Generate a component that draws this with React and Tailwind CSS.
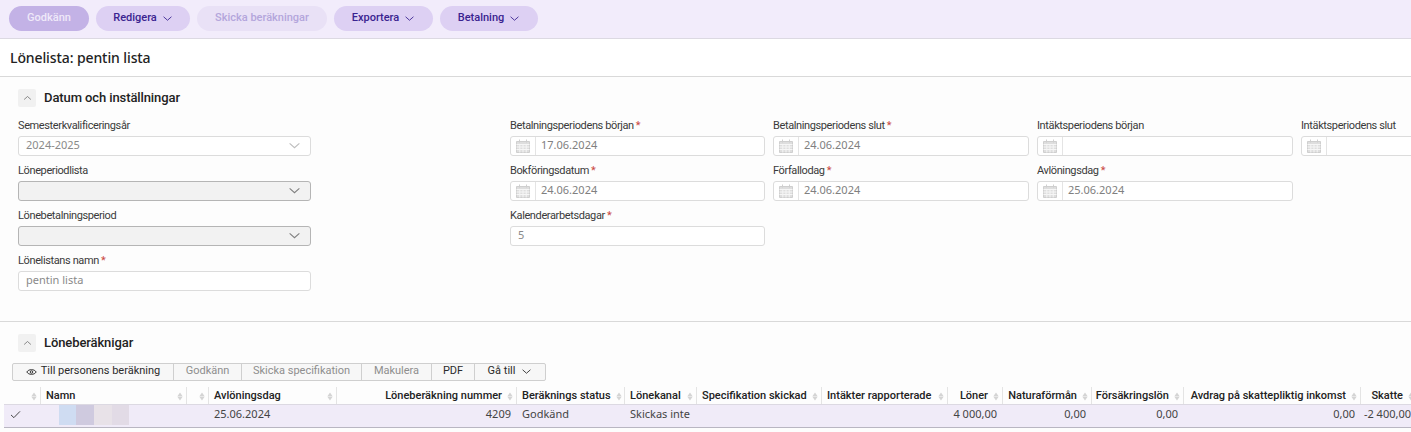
import React from "react";

const UI = { fontFamily: 'Roboto, "Noto Sans", sans-serif' };

const Chevron = ({ className = "", up = false }) => (
  <svg viewBox="0 0 12 8" className={className} fill="none" stroke="currentColor" strokeWidth="1">
    <path d={up ? "M1.5 6 L6 2 L10.5 6" : "M1.5 2 L6 6 L10.5 2"} />
  </svg>
);

const Calendar = () => (
  <svg viewBox="0 0 14 14" className="w-[14px] h-[14px] text-[#cfcfcf]" fill="none" stroke="currentColor" strokeWidth="1">
    <path d="M0.5 2.5h13v11h-13z" fill="#dedede" />
    <path d="M0.5 5.5h13M0.5 8h13M0.5 10.5h13M3.8 5.5v8M7 5.5v8M10.2 5.5v8" stroke="#f6f6f6" />
    <path d="M3.5 0.5v3M10.5 0.5v3" />
  </svg>
);

const Req = () => <span className="text-[#c9473f] ml-[2px]">*</span>;

const Label = ({ children, req }) => (
  <div className="h-[19px] leading-[18px] text-[#3a3a3a] whitespace-nowrap tracking-[-0.38px]" style={UI}>
    {children}
    {req && <Req />}
  </div>
);

const Field = ({ label, req, children }) => (
  <div className="h-[45px] min-w-0">
    <Label req={req}>{label}</Label>
    {children}
  </div>
);

const Box = ({ children, gray }) => (
  <div
    className={
      gray
        ? "h-[20px] border border-[#b5b5b5] rounded-[3px] bg-[#f2f2f2] flex items-center px-[7px] text-[#808080]"
        : "h-[20px] border border-[#dcdcdc] rounded-[3px] bg-white flex items-center px-[7px] text-[#8a8a8a]"
    }
  >
    {children}
  </div>
);

const SelectF = ({ label, value, gray }) => (
  <Field label={label}>
    <Box gray={gray}>
      <span className="flex-1">{value}</span>
      <Chevron className={gray ? "w-[13px] h-[9px] mr-[2px] text-[#808080]" : "w-[13px] h-[9px] mr-[2px] text-[#bdbdbd]"} />
    </Box>
  </Field>
);

const DateF = ({ label, value, req, cut }) => (
  <Field label={label} req={req}>
    <div className={cut ? "w-[130px] h-[20px] border border-[#dcdcdc] rounded-[3px] bg-white flex items-center text-[#808080]" : "h-[20px] border border-[#dcdcdc] rounded-[3px] bg-white flex items-center text-[#808080]"}>
      <div className="w-[25px] h-full flex items-center justify-center border-r border-[#e4e4e4] shrink-0">
        <Calendar />
      </div>
      <span className="pl-[5px]">{value}</span>
    </div>
  </Field>
);

const Pill = ({ children, chevron, variant, w }) => {
  const cls = {
    primary: "bg-[#c3b2e6] text-[#efe9f9]",
    normal: "bg-[#ddd0f3] text-[#3a2390]",
    disabled: "bg-[#e9e1f6] text-[#b4a6dc]",
  }[variant || "normal"];
  return (
    <div
      className={`h-[25px] rounded-full flex items-center justify-center gap-[5px] font-medium whitespace-nowrap shrink-0 ${cls}`}
      style={{ width: w, ...UI }}
    >
      {children}
      {chevron && <Chevron className="w-[11px] h-[7px]" />}
    </div>
  );
};

const SectionHead = ({ children }) => (
  <div className="flex items-center gap-[8px]">
    <div className="w-[18px] h-[18px] bg-[#f1f1f1] rounded-[2px] flex items-center justify-center text-[#666]">
      <Chevron up className="w-[9px] h-[6px]" />
    </div>
    <span className="text-[13px] font-medium text-[#222] tracking-[-0.1px]" style={UI}>{children}</span>
  </div>
);

const Seg = ({ children, w, off, last }) => (
  <div
    className={`h-full flex items-center justify-center whitespace-nowrap ${last ? "" : "border-r border-[#cfcfcf]"} ${off ? "text-[#8e8e8e]" : "text-[#2b2b2b]"}`}
    style={{ width: w, ...UI }}
  >
    {children}
  </div>
);

const cols = [
  { w: 33, sortOnly: true, label: "" },
  { w: 146, label: "Namn" },
  { w: 22, label: "" },
  { w: 128, label: "Avlöningsdag", value: "25.06.2024" },
  { w: 180, label: "Löneberäkning nummer", right: true, value: "4209" },
  { w: 108, label: "Beräknings status", value: "Godkänd" },
  { w: 72, label: "Lönekanal", value: "Skickas inte" },
  { w: 125, label: "Specifikation skickad" },
  { w: 126, label: "Intäkter rapporterade" },
  { w: 55, label: "Löner", right: true, value: "4 000,00" },
  { w: 89, label: "Naturaförmån", right: true, value: "0,00" },
  { w: 92, label: "Försäkringslön", right: true, value: "0,00" },
  { w: 177, label: "Avdrag på skattepliktig inkomst", right: true, value: "0,00" },
  { w: 56, label: "Skatte", right: true, value: "-2 400,00" },
];

const Sort = () => (
  <svg viewBox="0 0 6 9" className="w-[6px] h-[9px] text-[#d4d4d4] shrink-0" fill="currentColor">
    <path d="M3 0.5 L5.6 4.2 H0.4z M3 8.5 L0.4 4.8 H5.6z" />
  </svg>
);

export default function App() {
  return (
    <div
      className="w-[1411px] h-[432px] overflow-hidden bg-[#fdfdfd] text-[11px] text-[#333]"
      style={{ fontFamily: '"Noto Sans", "Open Sans", sans-serif' }}
    >
      <div className="h-[39px] bg-[#f2ecfb] border-b border-[#dcd9e2] flex items-center gap-[7px] pl-[9px] pb-[1px]">
        <Pill variant="primary" w={80}>Godkänn</Pill>
        <Pill chevron w={94}>Redigera</Pill>
        <Pill variant="disabled" w={130}>Skicka beräkningar</Pill>
        <Pill chevron w={99}>Exportera</Pill>
        <Pill chevron w={98}>Betalning</Pill>
      </div>
      <div className="h-[38px] bg-white border-b border-[#d9d9d9] flex items-center pl-[10px] pb-[1px] text-[14px] font-medium text-[#222] tracking-[-0.1px]">
        Lönelista: pentin lista
      </div>

      <div className="h-[245px] border-b border-[#d9d9d9] pl-[18px] pt-[11px]">
        <SectionHead>Datum och inställningar</SectionHead>
        <div className="flex mt-[9px]">
          <div className="w-[293px] mr-[199px] shrink-0">
            <SelectF label="Semesterkvalificeringsår" value="2024-2025" />
            <SelectF label="Löneperiodlista" gray />
            <SelectF label="Lönebetalningsperiod" gray />
            <Field label="Lönelistans namn" req>
              <Box>pentin lista</Box>
            </Field>
          </div>
          <div className="grid grid-cols-[255px_256px_256px_130px] gap-x-[8px] content-start shrink-0">
            <DateF label="Betalningsperiodens början" value="17.06.2024" req />
            <DateF label="Betalningsperiodens slut" value="24.06.2024" req />
            <DateF label="Intäktsperiodens början" />
            <DateF label="Intäktsperiodens slut" cut />
            <DateF label="Bokföringsdatum" value="24.06.2024" req />
            <DateF label="Förfallodag" value="24.06.2024" req />
            <DateF label="Avlöningsdag" value="25.06.2024" req />
            <div />
            <Field label="Kalenderarbetsdagar" req>
              <Box>5</Box>
            </Field>
          </div>
        </div>
      </div>

      <div className="pt-[11px]">
        <div className="pl-[18px]">
          <SectionHead>Löneberäknigar</SectionHead>
        </div>
        <div className="ml-[12px] mt-[10px] w-[534px] h-[18px] bg-[#f7f7f7] border border-[#cfcfcf] rounded-[2px] flex items-center">
          <Seg w={161}>
            <svg viewBox="0 0 14 10" className="w-[11px] h-[8px] mr-[4px]" fill="none" stroke="currentColor" strokeWidth="1.2">
              <path d="M1 5 C3.5 1 10.5 1 13 5 C10.5 9 3.5 9 1 5z" />
              <circle cx="7" cy="5" r="1.6" />
            </svg>
            Till personens beräkning
          </Seg>
          <Seg w={68} off>Godkänn</Seg>
          <Seg w={120} off>Skicka specifikation</Seg>
          <Seg w={70} off>Makulera</Seg>
          <Seg w={43}>PDF</Seg>
          <Seg w={70} last>
            Gå till
            <Chevron className="w-[11px] h-[7px] ml-[6px]" />
          </Seg>
        </div>

        <div className="flex mt-[6px] pl-[8px] h-[17px] w-[1480px]" style={UI}>
          {cols.map((c, i) => (
            <div
              key={i}
              className={`h-full flex items-center gap-[5px] font-medium text-[#222] whitespace-nowrap pt-[2px] pr-[3px] ${i < cols.length - 1 && i > 0 ? "border-r border-[#e4e4e4]" : ""} ${c.right ? "justify-end" : "pl-[5px]"} ${c.sortOnly ? "justify-end border-r border-[#e4e4e4]" : ""}`}
              style={{ width: c.w }}
            >
              {c.right ? null : <span className="flex-1">{c.label}</span>}
              {c.right ? <span>{c.label}</span> : null}
              <Sort />
            </div>
          ))}
        </div>
        <div className="flex h-[24px] bg-[#f0ebf8] border-t border-[#dcd9e2] border-b border-b-[#b9b6c2] ml-[4px] pl-[4px] pb-[2px] w-[1480px]">
          {cols.map((c, i) => (
            <div
              key={i}
              className={`h-full flex items-center whitespace-nowrap text-[#444] ${c.right ? "justify-end pr-[6px]" : "pl-[5px]"}`}
              style={{ width: c.w }}
            >
              {i === 0 && (
                <svg viewBox="0 0 12 10" className="w-[11px] h-[9px] text-[#333] -ml-[3px]" fill="none" stroke="currentColor" strokeWidth="1">
                  <path d="M1 5.5 L4.2 8.5 L11 1.5" />
                </svg>
              )}
              {i === 1 && (
                <div className="flex ml-[13px] h-[20px] blur-[0.5px]">
                  <div className="w-[17px] bg-[#cfdcf2]" />
                  <div className="w-[18px] bg-[#cfcadf]" />
                  <div className="w-[18px] bg-[#e8e2e8]" />
                  <div className="w-[17px] bg-[#e2dbe6]" />
                </div>
              )}
              {c.value}
            </div>
          ))}
        </div>
      </div>
    </div>
  );
}
